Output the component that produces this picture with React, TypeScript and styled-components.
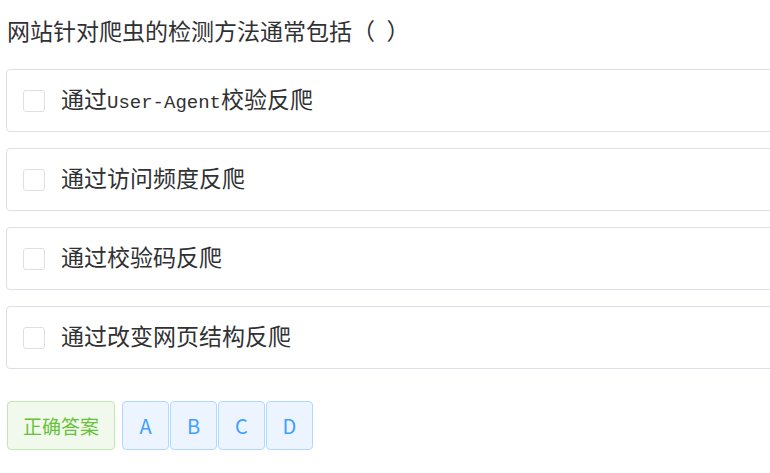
import React from 'react'
import styled, { createGlobalStyle } from 'styled-components'

const GlobalStyle = createGlobalStyle`
  html, body {
    margin: 0;
    padding: 0;
    background: #fff;
    overflow: hidden;
  }
`

const options = [
  { key: 'A', parts: ['通过', 'User-Agent', '校验反爬'] },
  { key: 'B', parts: ['通过访问频度反爬'] },
  { key: 'C', parts: ['通过校验码反爬'] },
  { key: 'D', parts: ['通过改变网页结构反爬'] }
]

const App: React.FC = () => {
  return (
    <>
      <GlobalStyle />
      <StyledPage lang="zh-CN">
        <StyledTitle>网站针对爬虫的检测方法通常包括（{'\u2002'}）</StyledTitle>
        <StyledOptions>
          {options.map(opt => (
            <StyledOption key={opt.key}>
              <StyledCheckbox />
              <StyledLabel>
                {opt.parts.map((p, i) =>
                  /^[\x00-\x7f]+$/.test(p) ? <StyledLatin key={i}>{p}</StyledLatin> : <span key={i}>{p}</span>
                )}
              </StyledLabel>
            </StyledOption>
          ))}
        </StyledOptions>
        <StyledActions>
          <StyledAnswerButton>正确答案</StyledAnswerButton>
          <StyledKeys>
            {options.map(opt => (
              <StyledKeyButton key={opt.key}>{opt.key}</StyledKeyButton>
            ))}
          </StyledKeys>
        </StyledActions>
      </StyledPage>
    </>
  )
}

const StyledPage = styled.div`
  width: 800px;
  padding: 17px 0 0 6px;
  box-sizing: border-box;
  font-family: 'Noto Sans CJK SC', sans-serif;
  color: #303133;
`

const StyledTitle = styled.div`
  font-size: 23px;
  line-height: 26px;
  height: 26px;
  padding-left: 1px;
  margin-bottom: 26px;
  white-space: pre;
`

const StyledOptions = styled.div`
  display: flex;
  flex-direction: column;
  gap: 16px;
`

const StyledOption = styled.div`
  display: flex;
  align-items: center;
  height: 63px;
  box-sizing: border-box;
  border: 1px solid #dcdfe6;
  border-radius: 4px;
  padding-left: 16px;
`

const StyledCheckbox = styled.span`
  width: 22px;
  height: 22px;
  box-sizing: border-box;
  border: 1px solid #dcdfe6;
  border-radius: 3px;
  background: #fff;
  margin-right: 16px;
  flex-shrink: 0;
`

const StyledLabel = styled.span`
  display: block;
  font-size: 23px;
  line-height: 28px;
  height: 28px;
  margin-top: -5px;
  color: #303133;
`

const StyledLatin = styled.span`
  font-family: 'Liberation Mono', monospace;
  font-size: 19px;
  line-height: 28px;
`

const StyledActions = styled.div`
  display: flex;
  align-items: center;
  gap: 7px;
  margin-top: 32px;
  padding-left: 1px;
`

const StyledKeys = styled.div`
  display: flex;
  gap: 1px;
`

const StyledButtonBase = styled.button`
  height: 49px;
  box-sizing: border-box;
  border-radius: 4px;
  font-family: 'Noto Sans CJK SC', sans-serif;
  line-height: 1;
  cursor: pointer;
  display: flex;
  align-items: center;
  justify-content: center;
  padding: 0;
`

const StyledAnswerButton = styled(StyledButtonBase)`
  width: 108px;
  font-size: 19px;
  background: #f0f9eb;
  border: 1px solid #c2e7b0;
  color: #67c23a;
`

const StyledKeyButton = styled(StyledButtonBase)`
  width: 47px;
  font-size: 20px;
  background: #ecf5ff;
  border: 1px solid #b3d8ff;
  color: #409eff;
`

export default App
